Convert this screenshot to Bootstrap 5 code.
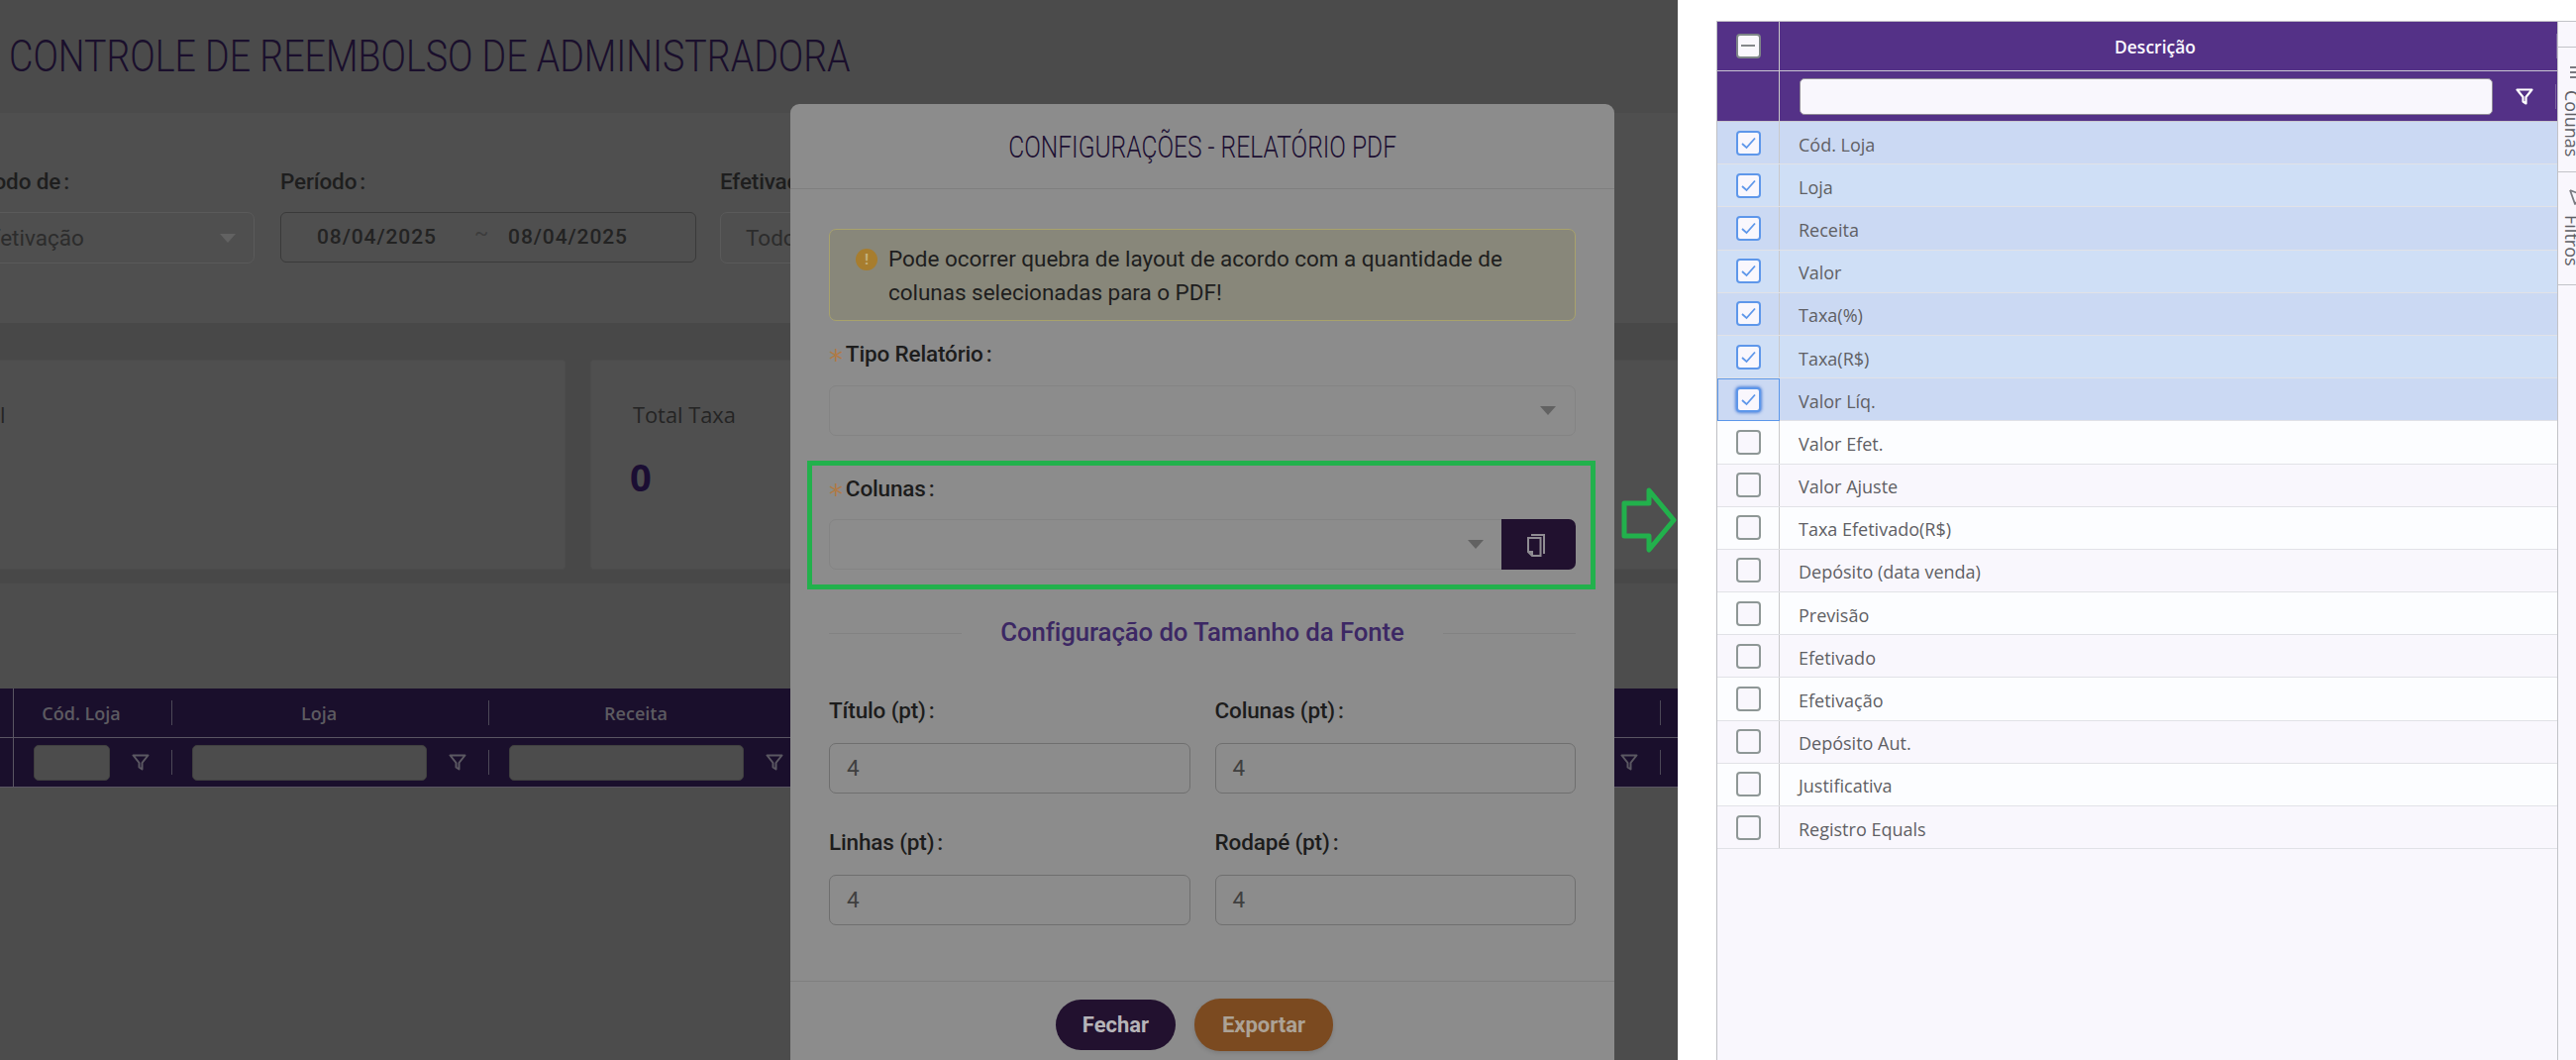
<!DOCTYPE html>
<html lang="pt-BR">
<head>
<meta charset="utf-8">
<title>Controle de Reembolso de Administradora</title>
<link rel="stylesheet" href="https://cdn.jsdelivr.net/npm/bootstrap@5.3.0/dist/css/bootstrap.min.css">
<style>
html,body{margin:0;height:1070px;overflow:hidden;background:#fff;font-family:Roboto,"Liberation Sans",sans-serif}
.stage{width:2601px;height:1070px;overflow:hidden}
.dim-pane{width:1694px;height:1070px;flex:none;position:relative;overflow:hidden;background:#484848}
.top-title{height:114px;background:#4b4b4b;padding-left:9px;padding-top:28px;white-space:nowrap}
.top-title h1{display:inline-block;margin:0;font:300 45px/58px Roboto,sans-serif;color:#1a0f2c;transform:scaleX(.835);transform-origin:left center}
.filter-band{height:212px;background:#4f4f4f;margin-left:-46px;padding-top:54px;gap:26px;white-space:nowrap;width:1800px}
.fgroup{flex:none}
.fg3{margin-left:-2px}
.fgroup label{display:block;font:500 22.5px/30px Roboto,sans-serif;color:#1e1e1e;margin-bottom:16px;letter-spacing:-.15px}
.cl{margin-left:3px}
.dim-select{height:52px;border:1px solid #5a5a5a;border-radius:7px;padding:0 18px 0 25px;font:400 22.500px/50px Roboto,sans-serif;color:#2c2c2c}
.dim-date{height:51px;margin-top:2px;border:1px solid #3a3a3a;border-radius:6px;font:500 21px/49px Roboto,sans-serif;color:#232323;letter-spacing:.9px;padding-left:36px}
.tilde{margin:0 19px 0 38px;color:#3c3c3c;font-weight:400;position:relative;top:-4px}
.caret-mark{width:0;height:0;border-left:8px solid transparent;border-right:8px solid transparent;border-top:9px solid #626262;flex:none}
.cards-band{height:263px;padding-top:37px;margin-left:-88px;gap:25px;width:1900px}
.dim-card{height:212px;background:#4f4f4f;border:1px solid #4c4c4c;border-radius:3px;padding:39px 42px;flex:none}
.dim-card .cap{font:400 21.800px/32px "Open Sans",sans-serif;color:#242424}
.dim-card .val{font:700 38px/52px "Open Sans",sans-serif;color:#1b0e33;margin-top:20px;margin-left:-3px}
.gap-band{height:106px;background:#4d4d4d}
.under-band{height:275px;background:#4c4c4c}
.dim-head{height:100px;background:#1a0f2c}
.dim-row{height:50px;border-bottom:1px solid #5a5563}
.hcell{flex:none;height:100%;font:600 18px/1 "Open Sans",sans-serif;color:#5d5b61}
.hcell.w0{width:14px;border-right:1px solid #5a5563}
.hcell.w1{width:160px}.hcell.w2{width:320px}.hcell.w3{width:223px}
.htxt{flex:1;text-align:center;padding-right:23px}
.vsep{width:1px;height:25px;background:#4c4857;flex:none}
.gcell{padding-left:20px;gap:0}
.ginput{flex:1;height:36px;background:#4c4c4c;border:1px solid #3f3f3f;border-radius:5px;min-width:0}
.gfun{width:62px;display:flex;justify-content:center;flex:none}
.cfg-modal{position:absolute;left:798px;top:105px;width:832px;height:1000px;background:#8c8c8c;border:0;border-radius:9px;display:block}
.cfg-modal .modal-header{height:86px;padding:0;border-bottom:1px solid #7f7f7f;justify-content:center;overflow:hidden}
.cfg-modal h2{margin:0;font:300 32px/40px Roboto,sans-serif;color:#1d1033;white-space:nowrap;transform:scaleX(.768)}
.cfg-modal .modal-body{padding:40px 39px 58px;border-bottom:1px solid #7f7f7f;height:800px;flex:none}
.warn-box{height:93px;background:#88877a;border:1px solid #a8a26c;border-radius:7px;padding:12px 20px 0 26px;margin:0 0 18px;gap:11px;font:400 22.500px/34px Roboto,sans-serif;color:#1e1e1e;display:flex;letter-spacing:-.03px}
.warn-dot{width:22px;height:22px;border-radius:50%;background:#a77d2e;color:#c2b07d;font:700 15px/22px Roboto,sans-serif;text-align:center;flex:none;margin-top:7px}
.cfg-label{display:block;font:500 22.500px/28px Roboto,sans-serif;color:#1c1c1c;margin-bottom:18px;padding:0;letter-spacing:-.15px}
.cfg-label i{font:400 28px/1 "DejaVu Sans",sans-serif;color:#b07a45;margin-right:3px;position:relative;top:8px}
.cfg-select{height:51px;background:#8c8c8c;border:1px solid #848484;border-radius:7px;padding:0 19px;margin-bottom:38px}
.cfg-col .cfg-label{margin-bottom:17px}
.cfg-col .cfg-select{margin:0;flex:1;border-radius:7px 0 0 7px;padding-right:18px;background:#8c8c8c}
.copy-btn{width:75px;height:51px;background:#21112f;border:0;border-radius:0 7px 7px 0;padding:0 5px 0 0}
.sect-head{margin:49px 0;height:30px;gap:39px}
.sect-head hr{flex:1;margin:0;border-top:1px solid #828282;opacity:1}
.sect-head span{font:500 25.800px/30px Roboto,sans-serif;color:#3c2864;letter-spacing:-.1px;white-space:nowrap;padding-bottom:2px}
.cfg-row{--bs-gutter-x:25px}
.cfg-num{height:51px;background:#8c8c8c;border:1px solid #6f6f6f;border-radius:7px;padding:0 17px;font:400 22.500px/49px Roboto,sans-serif;color:#3f3f3f;margin-bottom:35px}
.cfg-row:last-child .cfg-num{margin-bottom:0}
.cfg-row .cfg-label{margin-bottom:19px}
.cfg-modal .modal-footer{border:0;padding:17px 16px 0 0;justify-content:center;gap:19px;align-items:center}
.pill-a,.pill-b{margin:0;border:0;border-radius:26px;font:700 22px/1 Roboto,sans-serif;padding:0}
.pill-a{width:121px;height:51px;background:#22112f;color:#b6b4b8}
.pill-b{width:140px;height:53px;background:#7b4a20;color:#aca296;box-shadow:0 2px 4px rgba(0,0,0,.12)}
.pill-a:hover{background:#22112f;color:#b6b4b8}
.pill-b:hover{background:#7b4a20;color:#aca296}
.green-frame{position:absolute;left:815px;top:465px;width:796px;height:130px;border:5px solid #22b14c}
.green-arrow{position:absolute;left:1636px;top:491px;width:58px;height:68px}
.list-pane{flex:1;padding:21px 0 0 39px;min-width:0;background:#fff}
.col-grid{height:1049px}
.col-main{width:849px;flex:none;background:#f9f7fd;border-left:1px solid #bfc0c4}
.g-head{background:#543187;color:#fff}
.g-h1{height:51px;border-top:1px solid #c2c0c8;border-bottom:1px solid #c9c4d2;box-sizing:border-box}
.g-h2{height:51px;border-bottom:1px solid #c9c9cf;box-sizing:border-box}
.g-sel{width:63px;flex:none;height:100%;border-right:1px solid #c8c8c8;position:relative}
.g-title{flex:1;font:600 17.500px/1 "Open Sans",sans-serif;text-align:center;padding-right:26px;padding-top:2px;color:#fbf9ff}
.g-inp{width:700px;height:37px;margin-left:20px;background:#f9f7fd;border:1px solid #8f8a97;border-radius:5px;flex:none}
.g-fun{width:63px;display:flex;justify-content:center;flex:none}
.vs2{width:1px;height:25px;background:#7c639f;flex:none}
.g-row{height:43.2px;border-bottom:1px solid #e1e2e7;box-sizing:border-box;font:400 18px/1 "Open Sans",sans-serif;color:#5f5f64}
.g-row .g-sel{border-right:1px solid #c9c9cb}
.g-row .g-txt{padding-left:19px;padding-top:3px}
.r-a{background:#cbd9f3}.r-b{background:#cfdff6}.r-c{background:#fcfdff}.r-d{background:#f9f7fd}
.g-row.is-focus .g-sel{border:1px solid #5b97ea;height:calc(100% + 1px);align-self:flex-start}
.tick{width:25px;height:25px;border-radius:4px;background:#f9f7fd;border:2px solid #8e9796;flex:none;box-sizing:border-box}
.tick.on{border-color:#5e97ea}
.tick.glow{box-shadow:0 0 3px 1px rgba(66,120,215,.85)}
.tick.mix{border:2.5px solid #7e8688}
.tick svg{display:block}
.col-side{width:19px;flex:none;background:#f9f7fd;border-left:1px solid #c2c3c8;overflow:hidden;position:relative}
.side-tab{border-bottom:1px solid #c2c3c8;overflow:hidden;box-sizing:border-box;color:#606066;font:400 18px/20px "Open Sans",sans-serif;padding-left:3px}
.side-v{writing-mode:vertical-rl;white-space:nowrap;width:24px}
.side-v span,.side-v svg{display:inline-block}
.side-v span{margin-top:10px}
</style>
</head>
<body>
<div class="stage d-flex">
  <div class="dim-pane">
    <div class="top-title"><h1>CONTROLE DE REEMBOLSO DE ADMINISTRADORA</h1></div>
    <div class="filter-band d-flex">
      <div class="fgroup" style="width:303px"><label>Período de<span class="cl">:</span></label>
        <div class="dim-select d-flex align-items-center justify-content-between"><span>Efetivação</span><span class="caret-mark"></span></div></div>
      <div class="fgroup" style="width:420px"><label>Período<span class="cl">:</span></label>
        <div class="dim-date">08/04/2025<span class="tilde">~</span>08/04/2025</div></div>
      <div class="fgroup fg3" style="width:400px"><label>Efetivado<span class="cl">:</span></label>
        <div class="dim-select"><span>Todos</span></div></div>
    </div>
    <div class="cards-band d-flex">
      <div class="dim-card" style="width:659px"><div class="cap">Total</div></div>
      <div class="dim-card" style="width:1100px"><div class="cap">Total Taxa</div><div class="val">0</div></div>
    </div>
    <div class="gap-band"></div>
    <div class="dim-head">
      <div class="dim-row d-flex">
        <div class="hcell w0"></div>
        <div class="hcell w1 d-flex align-items-center"><span class="htxt">Cód. Loja</span><span class="vsep"></span></div>
        <div class="hcell w2 d-flex align-items-center"><span class="htxt">Loja</span><span class="vsep"></span></div>
        <div class="hcell w2 d-flex align-items-center"><span class="htxt">Receita</span><span class="vsep"></span></div>
        <div class="hcell w2 d-flex align-items-center"><span class="htxt"></span><span class="vsep"></span></div>
        <div class="hcell w2 d-flex align-items-center"><span class="htxt"></span><span class="vsep"></span></div>
        <div class="hcell w3 d-flex align-items-center"><span class="htxt"></span><span class="vsep"></span></div>
      </div>
      <div class="dim-row d-flex">
        <div class="hcell w0"></div>
        <div class="hcell w1 gcell d-flex align-items-center"><span class="ginput"></span><span class="gfun"><svg width="18" height="17" viewBox="0 0 18 17" fill="none" stroke="#5b5862" stroke-width="2" stroke-linejoin="round"><path d="M1.5 1.5H16.5L10.5 9V15.5L7.5 13.5V9Z"/></svg></span><span class="vsep"></span></div>
        <div class="hcell w2 gcell d-flex align-items-center"><span class="ginput"></span><span class="gfun"><svg width="18" height="17" viewBox="0 0 18 17" fill="none" stroke="#5b5862" stroke-width="2" stroke-linejoin="round"><path d="M1.5 1.5H16.5L10.5 9V15.5L7.5 13.5V9Z"/></svg></span><span class="vsep"></span></div>
        <div class="hcell w2 gcell d-flex align-items-center"><span class="ginput"></span><span class="gfun"><svg width="18" height="17" viewBox="0 0 18 17" fill="none" stroke="#5b5862" stroke-width="2" stroke-linejoin="round"><path d="M1.5 1.5H16.5L10.5 9V15.5L7.5 13.5V9Z"/></svg></span><span class="vsep"></span></div>
        <div class="hcell w2 gcell d-flex align-items-center"><span class="ginput"></span><span class="gfun"></span><span class="vsep"></span></div>
        <div class="hcell w2 gcell d-flex align-items-center"><span class="ginput"></span><span class="gfun"></span><span class="vsep"></span></div>
        <div class="hcell w3 gcell d-flex align-items-center"><span class="ginput"></span><span class="gfun"><svg width="18" height="17" viewBox="0 0 18 17" fill="none" stroke="#5b5862" stroke-width="2" stroke-linejoin="round"><path d="M1.5 1.5H16.5L10.5 9V15.5L7.5 13.5V9Z"/></svg></span><span class="vsep"></span></div>
      </div>
    </div>
    <div class="under-band"></div>

    <div class="modal-content cfg-modal">
      <div class="modal-header"><h2>CONFIGURAÇÕES - RELATÓRIO PDF</h2></div>
      <div class="modal-body">
        <div class="alert warn-box" role="alert"><span class="warn-dot">!</span><span>Pode ocorrer quebra de layout de acordo com a quantidade de colunas selecionadas para o PDF!</span></div>
        <label class="form-label cfg-label"><i>*</i>Tipo Relatório<span class="cl">:</span></label>
        <div class="form-control cfg-select d-flex align-items-center justify-content-end"><span class="caret-mark"></span></div>
        <div class="cfg-col">
          <label class="form-label cfg-label"><i>*</i>Colunas<span class="cl">:</span></label>
          <div class="input-group">
            <div class="form-control cfg-select d-flex align-items-center justify-content-end"><span class="caret-mark"></span></div>
            <button class="btn copy-btn d-flex align-items-center justify-content-center" type="button" aria-label="Copiar">
              <svg width="20" height="24" viewBox="0 0 20 24" fill="none" stroke="#8f8c92" stroke-width="2"><path d="M5 2H18V21"/><path d="M2 5H14.500V23H6L2 19Z"/><path d="M6 23V19H2"/></svg>
            </button>
          </div>
        </div>
        <div class="sect-head d-flex align-items-center"><hr><span>Configuração do Tamanho da Fonte</span><hr></div>
        <div class="row cfg-row">
          <div class="col-6"><label class="form-label cfg-label">Título (pt)<span class="cl">:</span></label><div class="form-control cfg-num">4</div></div>
          <div class="col-6"><label class="form-label cfg-label">Colunas (pt)<span class="cl">:</span></label><div class="form-control cfg-num">4</div></div>
        </div>
        <div class="row cfg-row">
          <div class="col-6"><label class="form-label cfg-label">Linhas (pt)<span class="cl">:</span></label><div class="form-control cfg-num">4</div></div>
          <div class="col-6"><label class="form-label cfg-label">Rodapé (pt)<span class="cl">:</span></label><div class="form-control cfg-num">4</div></div>
        </div>
      </div>
      <div class="modal-footer">
        <button class="btn pill-a" type="button">Fechar</button>
        <button class="btn pill-b" type="button">Exportar</button>
      </div>
    </div>
    <div class="green-frame"></div>
    <svg class="green-arrow" viewBox="0 0 58 68" fill="none" stroke="#22b14c" stroke-width="5" stroke-linejoin="round"><path d="M4 17H29V4L54 34L29 64V50H4Z"/></svg>
  </div>

  <div class="list-pane">
    <div class="col-grid d-flex">
      <div class="col-main">
        <div class="g-head">
          <div class="g-h1 d-flex align-items-center">
            <div class="g-sel d-flex align-items-center justify-content-center"><span class="tick mix"><svg viewBox="0 0 20 20" width="20" height="20"><path d="M3 10H17" stroke="#84878a" stroke-width="2"/></svg></span></div>
            <div class="g-title">Descrição</div><span class="vs2"></span>
          </div>
          <div class="g-h2 d-flex align-items-center">
            <div class="g-sel"></div>
            <span class="g-inp"></span>
            <span class="g-fun"><svg width="18" height="17" viewBox="0 0 18 17" fill="none" stroke="#fff" stroke-width="2.200" stroke-linejoin="round"><path d="M1.500 1.500H16.500L10.500 9V15.500L7.500 13.500V9Z"/></svg></span><span class="vs2"></span>
          </div>
        </div>
        <div class="g-row r-a d-flex align-items-center"><div class="g-sel d-flex align-items-center justify-content-center"><span class="tick on"><svg viewBox="0 0 21 21" width="21" height="21"><path d="M4 11L8.500 15L17 5.500" fill="none" stroke="#5e97ea" stroke-width="1.800"/></svg></span></div><div class="g-txt">Cód. Loja</div></div>
        <div class="g-row r-b d-flex align-items-center"><div class="g-sel d-flex align-items-center justify-content-center"><span class="tick on"><svg viewBox="0 0 21 21" width="21" height="21"><path d="M4 11L8.500 15L17 5.500" fill="none" stroke="#5e97ea" stroke-width="1.800"/></svg></span></div><div class="g-txt">Loja</div></div>
        <div class="g-row r-a d-flex align-items-center"><div class="g-sel d-flex align-items-center justify-content-center"><span class="tick on"><svg viewBox="0 0 21 21" width="21" height="21"><path d="M4 11L8.500 15L17 5.500" fill="none" stroke="#5e97ea" stroke-width="1.800"/></svg></span></div><div class="g-txt">Receita</div></div>
        <div class="g-row r-b d-flex align-items-center"><div class="g-sel d-flex align-items-center justify-content-center"><span class="tick on"><svg viewBox="0 0 21 21" width="21" height="21"><path d="M4 11L8.500 15L17 5.500" fill="none" stroke="#5e97ea" stroke-width="1.800"/></svg></span></div><div class="g-txt">Valor</div></div>
        <div class="g-row r-a d-flex align-items-center"><div class="g-sel d-flex align-items-center justify-content-center"><span class="tick on"><svg viewBox="0 0 21 21" width="21" height="21"><path d="M4 11L8.500 15L17 5.500" fill="none" stroke="#5e97ea" stroke-width="1.800"/></svg></span></div><div class="g-txt">Taxa(%)</div></div>
        <div class="g-row r-b d-flex align-items-center"><div class="g-sel d-flex align-items-center justify-content-center"><span class="tick on"><svg viewBox="0 0 21 21" width="21" height="21"><path d="M4 11L8.500 15L17 5.500" fill="none" stroke="#5e97ea" stroke-width="1.800"/></svg></span></div><div class="g-txt">Taxa(R$)</div></div>
        <div class="g-row r-a is-focus d-flex align-items-center"><div class="g-sel d-flex align-items-center justify-content-center"><span class="tick on glow"><svg viewBox="0 0 21 21" width="21" height="21"><path d="M4 11L8.500 15L17 5.500" fill="none" stroke="#5e97ea" stroke-width="1.800"/></svg></span></div><div class="g-txt">Valor Líq.</div></div>
        <div class="g-row r-c d-flex align-items-center"><div class="g-sel d-flex align-items-center justify-content-center"><span class="tick"></span></div><div class="g-txt">Valor Efet.</div></div>
        <div class="g-row r-d d-flex align-items-center"><div class="g-sel d-flex align-items-center justify-content-center"><span class="tick"></span></div><div class="g-txt">Valor Ajuste</div></div>
        <div class="g-row r-c d-flex align-items-center"><div class="g-sel d-flex align-items-center justify-content-center"><span class="tick"></span></div><div class="g-txt">Taxa Efetivado(R$)</div></div>
        <div class="g-row r-d d-flex align-items-center"><div class="g-sel d-flex align-items-center justify-content-center"><span class="tick"></span></div><div class="g-txt">Depósito (data venda)</div></div>
        <div class="g-row r-c d-flex align-items-center"><div class="g-sel d-flex align-items-center justify-content-center"><span class="tick"></span></div><div class="g-txt">Previsão</div></div>
        <div class="g-row r-d d-flex align-items-center"><div class="g-sel d-flex align-items-center justify-content-center"><span class="tick"></span></div><div class="g-txt">Efetivado</div></div>
        <div class="g-row r-c d-flex align-items-center"><div class="g-sel d-flex align-items-center justify-content-center"><span class="tick"></span></div><div class="g-txt">Efetivação</div></div>
        <div class="g-row r-d d-flex align-items-center"><div class="g-sel d-flex align-items-center justify-content-center"><span class="tick"></span></div><div class="g-txt">Depósito Aut.</div></div>
        <div class="g-row r-c d-flex align-items-center"><div class="g-sel d-flex align-items-center justify-content-center"><span class="tick"></span></div><div class="g-txt">Justificativa</div></div>
        <div class="g-row r-d d-flex align-items-center"><div class="g-sel d-flex align-items-center justify-content-center"><span class="tick"></span></div><div class="g-txt">Registro Equals</div></div>
      </div>
      <div class="col-side">
        <div class="side-tab" style="height:27px;border-top:1px solid #c2c3c8"></div>
        <div class="side-tab" style="height:126px;padding-top:17px"><div class="side-v"><svg width="16" height="16" viewBox="0 0 16 16" stroke="#7a7a80" stroke-width="1.800" fill="none"><path d="M1 3H16M1 8H16M1 13H16"/></svg><span>Colunas</span></div></div>
        <div class="side-tab" style="height:114px;padding-top:17px"><div class="side-v"><svg width="16" height="16" viewBox="0 0 16 16" stroke="#7a7a80" stroke-width="1.800" fill="none" stroke-linejoin="round"><path d="M1 1L16 7M1 1L6 15L9 11L16 12"/></svg><span>Filtros</span></div></div>
      </div>
    </div>
  </div>
</div>
<script src="https://cdn.jsdelivr.net/npm/bootstrap@5.3.0/dist/js/bootstrap.bundle.min.js"></script>
</body>
</html>
